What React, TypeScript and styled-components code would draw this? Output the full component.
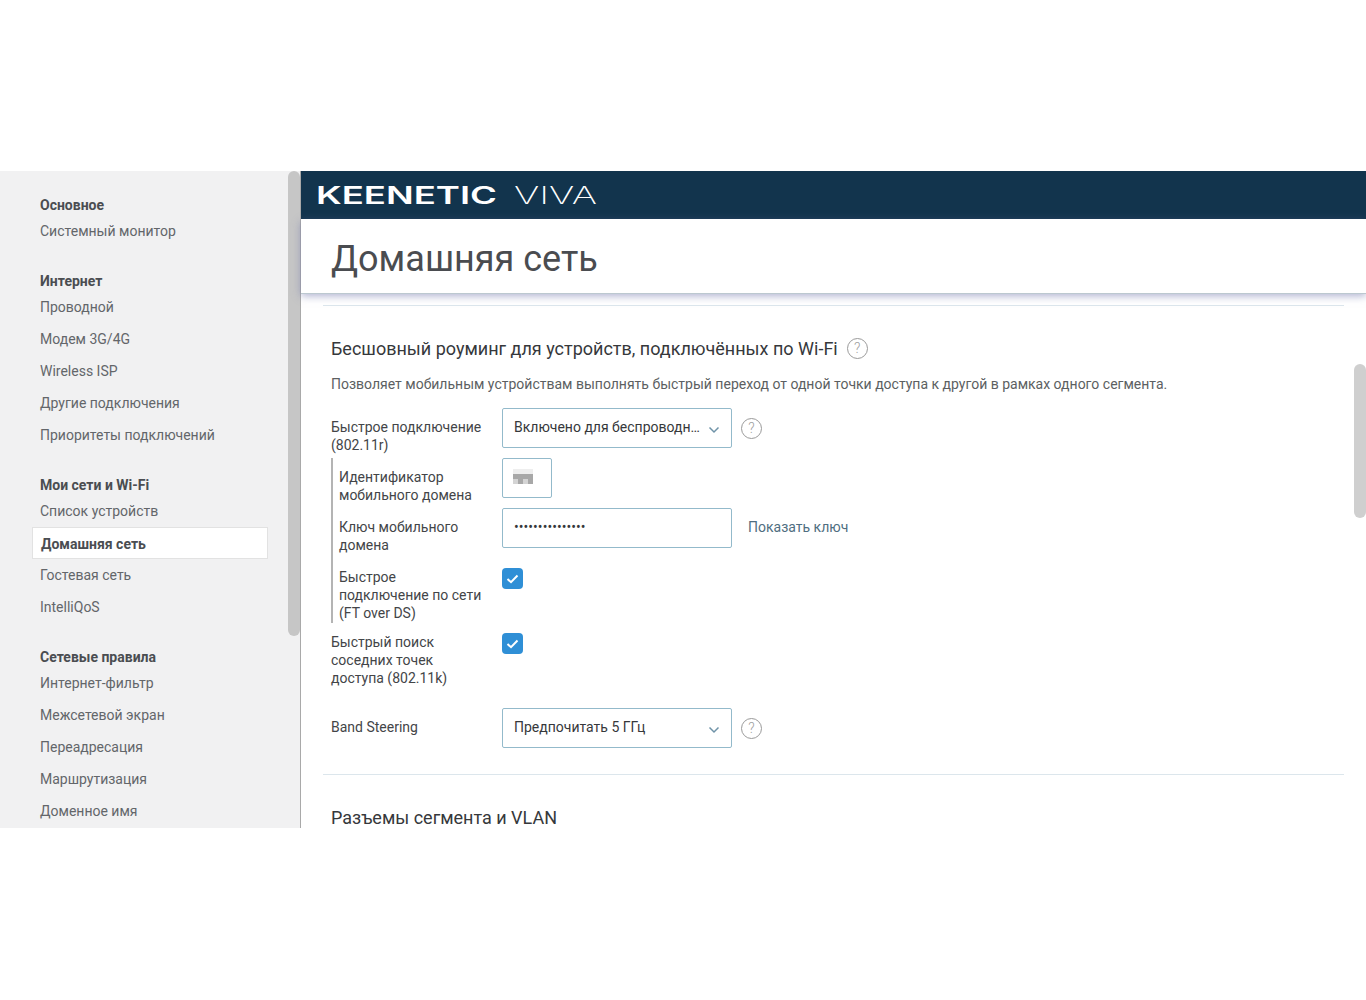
import React from "react";
import styled, { createGlobalStyle } from "styled-components";

const Global = createGlobalStyle`
  html, body { margin: 0; padding: 0; background: #fff; }
  body { font-family: Roboto, "Noto Sans", "Liberation Sans", sans-serif; font-size: 14px; color: #333; }
`;

const Page = styled.div`
  padding-top: 171px;
  height: 829px;
  box-sizing: border-box;
  background: #fff;
`;

const Frame = styled.div`
  display: flex;
  height: 657px;
  overflow: hidden;
  position: relative;
`;

const Sidebar = styled.nav`
  width: 300px;
  flex: none;
  background: #f1f1f2;
  padding-top: 24px;
  box-sizing: border-box;
  overflow: hidden;
  position: relative;
`;

const SideThumb = styled.div`
  position: absolute;
  left: 288px;
  top: 0;
  width: 12px;
  height: 465px;
  background: #c6c6c6;
  border-radius: 6px;
`;

const MenuGroup = styled.div`
  margin-bottom: 24px;
`;

const MenuHeading = styled.div`
  height: 20px;
  line-height: 20px;
  padding-left: 40px;
  font-weight: 700;
  color: #4a4d51;
`;

const MenuItem = styled.a<{ $active?: boolean }>`
  display: block;
  box-sizing: border-box;
  width: 236px;
  height: 32px;
  line-height: ${(p) => (p.$active ? "34px" : "32px")};
  margin-left: 32px;
  padding-left: ${(p) => (p.$active ? "9px" : "8px")};
  color: ${(p) => (p.$active ? "#4a4d51" : "#63666a")};
  font-weight: ${(p) => (p.$active ? 700 : 400)};
  background: ${(p) => (p.$active ? "#fff" : "transparent")};
  box-shadow: ${(p) => (p.$active ? "inset 0 0 0 1px #e2e2e2" : "none")};
`;

const Main = styled.main`
  flex: 1;
  min-width: 0;
  border-left: 1px solid #a9a9a9;
  display: flex;
  flex-direction: column;
  position: relative;
  background: #fff;
`;

const Brand = styled.header`
  height: 48px;
  flex: none;
  background: #12344d;
  display: flex;
  align-items: center;
`;

const LogoSvg = styled.svg`
  display: block;
  width: 300px;
  height: 48px;
  text {
    fill: #fff;
    font-family: Inter, "Liberation Sans", sans-serif;
  }
`;

const TitleBar = styled.div`
  height: 74px;
  flex: none;
  box-sizing: border-box;
  padding: 6px 0 0 30px;
  display: flex;
  align-items: center;
  background: #fff;
  box-shadow: 0 1px 0 #bcc8d0, 0 3px 8px rgba(110, 115, 170, 0.55);
  position: relative;
  z-index: 1;
`;

const Title = styled.h1`
  margin: 0;
  font-size: 36px;
  font-weight: 400;
  line-height: 44px;
  color: #4a4c50;
`;

const Body = styled.div`
  flex: 1;
  min-height: 0;
  overflow: hidden;
  padding: 12px 22px 0;
`;

const Divider = styled.hr`
  margin: 0;
  border: 0;
  border-top: 1px solid #dce6ec;
`;

const Section = styled.section`
  padding: 30px 8px 0;
`;

const SectionTitle = styled.h2`
  margin: 0;
  display: flex;
  align-items: center;
  gap: 9px;
  height: 24px;
  font-size: 18px;
  font-weight: 400;
  color: #36383b;
`;

const Description = styled.p`
  margin: 14px 0 0;
  height: 20px;
  line-height: 20px;
  font-size: 14px;
  color: #5c5f62;
`;

const Form = styled.div`
  margin-top: 14px;
`;

const Row = styled.div<{ $h: number }>`
  display: flex;
  height: ${(p) => p.$h}px;
`;

const Label = styled.div<{ $w?: number }>`
  width: ${(p) => p.$w ?? 171}px;
  flex: none;
  box-sizing: border-box;
  padding: 10px 18px 0 0;
  line-height: 18px;
  color: #434548;
`;

const Nested = styled.div`
  border-left: 2px solid #b4b4b4;
  padding-left: 6px;
`;

const Field = styled.div<{ $w: number }>`
  width: ${(p) => p.$w}px;
  height: 40px;
  flex: none;
  box-sizing: border-box;
  border: 1px solid #93bacb;
  border-radius: 2px;
  padding: 0 11px;
  display: flex;
  align-items: center;
  background: #fff;
  color: #36383b;
  position: relative;
`;

const SelectText = styled.span`
  flex: 1;
  min-width: 0;
  white-space: nowrap;
  overflow: hidden;
  text-overflow: ellipsis;
  margin-top: -2px;
  margin-right: 8px;
`;

const Chevron = styled.svg`
  width: 12px;
  height: 8px;
  flex: none;
  margin-top: 3px;
  fill: none;
  stroke: #6f93a8;
  stroke-width: 1.5;
`;

const Help = styled.span`
  box-sizing: border-box;
  width: 21px;
  height: 21px;
  flex: none;
  border: 1px solid #9a9a9a;
  border-radius: 50%;
  color: #a0a0a0;
  font-size: 14px;
  font-weight: 300;
  line-height: 19px;
  text-align: center;
`;

const HelpSlot = styled.div`
  margin-left: 9px;
  height: 40px;
  display: flex;
  align-items: center;
`;

const Redacted = styled.svg`
  width: 20px;
  height: 15px;
  display: block;
  margin: -4px 0 0 -1px;
`;

const Dots = styled.span`
  font-size: 14px;
  letter-spacing: 0.05px;
  color: #36383b;
  margin-top: -3px;
`;

const ShowKey = styled.a`
  margin-left: 16px;
  height: 40px;
  line-height: 38px;
  color: #506e81;
`;

const Check = styled.span`
  width: 21px;
  height: 21px;
  margin-top: 10px;
  border-radius: 4px;
  background: #2f8fd6;
  flex: none;
  display: flex;
  align-items: center;
  justify-content: center;
`;

const CheckMark = styled.svg`
  width: 13px;
  height: 10px;
  fill: none;
  stroke: #fff;
  stroke-width: 2;
`;

const ContentThumb = styled.div`
  position: absolute;
  right: 0;
  top: 193px;
  width: 12px;
  height: 154px;
  background: #cfcfcf;
  border-radius: 6px;
  z-index: 2;
`;

const menu = [
  { h: "Основное", items: ["Системный монитор"] },
  { h: "Интернет", items: ["Проводной", "Модем 3G/4G", "Wireless ISP", "Другие подключения", "Приоритеты подключений"] },
  { h: "Мои сети и Wi-Fi", items: ["Список устройств", "Домашняя сеть", "Гостевая сеть", "IntelliQoS"] },
  { h: "Сетевые правила", items: ["Интернет-фильтр", "Межсетевой экран", "Переадресация", "Маршрутизация", "Доменное имя"] },
];

const Down = () => (
  <Chevron viewBox="0 0 12 8"><polyline points="1.5,1.5 6,6 10.5,1.5" /></Chevron>
);

const Tick = () => (
  <Check>
    <CheckMark viewBox="0 0 13 10"><polyline points="1.5,5 5,8.2 11.5,1.5" /></CheckMark>
  </Check>
);

export default function App() {
  return (
    <Page>
      <Global />
      <Frame>
        <Sidebar>
          {menu.map((g) => (
            <MenuGroup key={g.h}>
              <MenuHeading>{g.h}</MenuHeading>
              {g.items.map((i) => (
                <MenuItem key={i} $active={i === "Домашняя сеть"}>{i}</MenuItem>
              ))}
            </MenuGroup>
          ))}
          <SideThumb />
        </Sidebar>
        <Main>
          <Brand>
            <LogoSvg viewBox="0 0 300 48">
              <text x="15" y="32.5" fontSize="24" fontWeight="600" textLength="181" lengthAdjust="spacingAndGlyphs">KEENETIC</text>
              <text x="213" y="32.5" fontSize="24" fontWeight="200" textLength="83" lengthAdjust="spacingAndGlyphs">VIVA</text>
            </LogoSvg>
          </Brand>
          <TitleBar><Title>Домашняя сеть</Title></TitleBar>
          <Body>
            <Divider />
            <Section>
              <SectionTitle>
                Бесшовный роуминг для устройств, подключённых по Wi-Fi
                <Help>?</Help>
              </SectionTitle>
              <Description>
                Позволяет мобильным устройствам выполнять быстрый переход от одной точки доступа к другой в рамках одного сегмента.
              </Description>
              <Form>
                <Row $h={50}>
                  <Label>Быстрое подключение (802.11r)</Label>
                  <Field $w={230}>
                    <SelectText>Включено для беспроводных сетей</SelectText>
                    <Down />
                  </Field>
                  <HelpSlot><Help>?</Help></HelpSlot>
                </Row>
                <Nested>
                  <Row $h={50}>
                    <Label $w={163}>Идентификатор мобильного домена</Label>
                    <Field $w={50}>
                      <Redacted viewBox="0 0 20 15">
                        <rect width="20" height="5" fill="#eeeeee" />
                        <rect y="5" width="20" height="10" fill="#a8a8a8" />
                        <rect x="0" y="10" width="5" height="5" fill="#d4d4d4" />
                        <rect x="10" y="10" width="5" height="5" fill="#d4d4d4" />
                      </Redacted>
                    </Field>
                  </Row>
                  <Row $h={50}>
                    <Label $w={163}>Ключ мобильного домена</Label>
                    <Field $w={230}><Dots>•••••••••••••••</Dots></Field>
                    <ShowKey>Показать ключ</ShowKey>
                  </Row>
                  <Row $h={65}>
                    <Label $w={163}>Быстрое подключение по сети (FT over DS)</Label>
                    <Tick />
                  </Row>
                </Nested>
                <Row $h={85}>
                  <Label>Быстрый поиск соседних точек доступа (802.11k)</Label>
                  <Tick />
                </Row>
                <Row $h={66}>
                  <Label>Band Steering</Label>
                  <Field $w={230}>
                    <SelectText>Предпочитать 5 ГГц</SelectText>
                    <Down />
                  </Field>
                  <HelpSlot><Help>?</Help></HelpSlot>
                </Row>
              </Form>
            </Section>
            <Divider />
            <Section>
              <SectionTitle>Разъемы сегмента и VLAN</SectionTitle>
            </Section>
          </Body>
          <ContentThumb />
        </Main>
      </Frame>
    </Page>
  );
}
